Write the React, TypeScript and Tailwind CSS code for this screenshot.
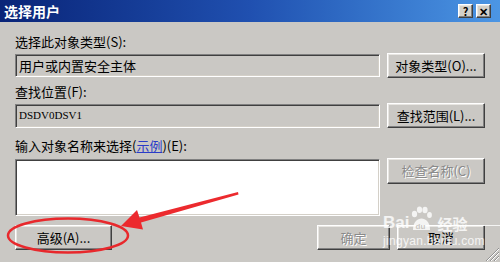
import React from 'react';

const raised =
  'border border-t-white border-l-white border-r-[#404040] border-b-[#404040] shadow-[inset_-1px_-1px_0_#808080,inset_1px_1px_0_#e8e6e2]';
const sunken =
  'border border-t-[#808080] border-l-[#808080] border-r-white border-b-white shadow-[inset_1px_1px_0_#404040,inset_-1px_-1px_0_#d4d0c8]';
const disabledText = 'text-[#8a8a8a] [text-shadow:1px_1px_0_#ffffff]';

function TitleButton({ children }: { children: React.ReactNode }) {
  return (
    <div
      className={`flex h-[14px] w-[15px] items-center justify-center bg-[#d4d0c8] text-[11px] font-bold leading-none text-black ${raised}`}
    >
      {children}
    </div>
  );
}

function Button({
  children,
  className = '',
  disabled = false,
}: {
  children: React.ReactNode;
  className?: string;
  disabled?: boolean;
}) {
  return (
    <div
      className={`flex h-[25px] items-center justify-center text-[13px] ${raised} ${
        disabled ? disabledText : 'text-black'
      } ${className}`}
    >
      {children}
    </div>
  );
}

// baidu jingyan watermark over the bottom right corner
function Watermark() {
  return (
    <div className="pointer-events-none absolute left-[383px] top-[206px] flex w-max flex-col whitespace-nowrap text-white/80">
      <div className="flex items-end">
        <span className="font-['Liberation_Sans',sans-serif] text-[17px] font-bold leading-none">Bai</span>
        <svg width="24" height="26" viewBox="0 0 24 26" className="mb-[-1px] shrink-0">
          <ellipse cx="5.5" cy="8" rx="2.6" ry="3.2" fill="currentColor" />
          <ellipse cx="10.5" cy="3.8" rx="2.6" ry="3.2" fill="currentColor" />
          <ellipse cx="16" cy="4" rx="2.6" ry="3.2" fill="currentColor" />
          <ellipse cx="20.5" cy="9" rx="2.4" ry="3" fill="currentColor" />
          <path d="M4 24 C4 16 8.5 12.5 12.5 12.5 C16.5 12.5 21 16 21 24 Z" fill="currentColor" />
          <text x="6.5" y="22.5" fontSize="8" fontFamily="Liberation Sans, sans-serif" fill="#c8c6c2" fontWeight="bold">
            du
          </text>
        </svg>
        <span className="ml-[4px] font-['Noto_Sans_CJK_SC',sans-serif] text-[15px] font-bold leading-none">经验</span>
        <div className="mb-[5px] ml-[6px] h-[1px] w-[40px] bg-white/80" />
      </div>
      <span className="mt-[4px] font-['Liberation_Sans',sans-serif] text-[12px] leading-none tracking-[0.3px]">
        jingyan.baidu.com
      </span>
    </div>
  );
}

export default function App() {
  return (
    <div className="relative h-[262px] w-[500px] overflow-hidden bg-[#cac8c4] font-['Noto_Sans_CJK_SC','Liberation_Sans',sans-serif] text-black">
      <div className="flex h-[22px] items-center justify-between bg-gradient-to-r from-[#0a2478] via-[#2050b0] to-[#4c96e4] pl-[4px] pr-[9px]">
        <span className="text-[14px] font-bold leading-none text-white">选择用户</span>
        <div className="flex gap-[3px]">
          <TitleButton>?</TitleButton>
          <TitleButton>✕</TitleButton>
        </div>
      </div>

      <div className="flex flex-col px-[15px]">
        <div className="mt-[12px] h-[16px] text-[13px] leading-[16px]">选择此对象类型(S):</div>
        <div className="mt-[3px] flex items-center gap-[7px]">
          <div className={`flex h-[23px] flex-1 items-center pl-[3px] text-[13px] ${sunken}`}>用户或内置安全主体</div>
          <Button className="w-[98px]">对象类型(O)...</Button>
        </div>

        <div className="mt-[6px] h-[16px] text-[13px] leading-[16px]">查找位置(F):</div>
        <div className="mt-[3px] flex items-center gap-[7px]">
          <div
            className={`flex h-[24px] flex-1 items-center pl-[3px] font-['Liberation_Serif',serif] text-[11px] ${sunken}`}
          >
            DSDV0DSV1
          </div>
          <Button className="h-[24px] w-[98px]">查找范围(L)...</Button>
        </div>

        <div className="mt-[10px] h-[16px] text-[13px] leading-[16px]">
          输入对象名称来选择(<span className="text-[#2a3cc8] underline">示例</span>)(E):
        </div>
        <div className="mt-[4px] flex items-start gap-[7px]">
          <div className={`mt-[1px] h-[57px] flex-1 bg-white ${sunken}`} />
          <Button disabled className="h-[26px] w-[98px]">
            检查名称(C)
          </Button>
        </div>

        <div className="mt-[9px] flex items-center">
          <Button className="w-[97px]">高级(A)...</Button>
          <div className="flex-1" />
          <Button disabled className="w-[73px]">
            确定
          </Button>
          <Button className="ml-[7px] w-[88px]">取消</Button>
        </div>
      </div>

      <Watermark />

      <svg className="pointer-events-none absolute left-0 top-0" width="500" height="262">
        <ellipse cx="68" cy="235.5" rx="60" ry="17" fill="none" stroke="#e8282c" strokeWidth="2.5" />
        <polygon
          points="121,226 137,210 139.5,217.5 238,192 238.5,194.5 141,222.5 143,229.5"
          fill="#ec2a2e"
        />
        <g stroke="#909090" strokeWidth="1">
          <line x1="486" y1="261" x2="499" y2="248" />
          <line x1="490" y1="261" x2="499" y2="252" />
          <line x1="494" y1="261" x2="499" y2="256" />
        </g>
        <g stroke="#ffffff" strokeWidth="1">
          <line x1="487" y1="261" x2="499" y2="249" />
          <line x1="491" y1="261" x2="499" y2="253" />
          <line x1="495" y1="261" x2="499" y2="257" />
        </g>
      </svg>
    </div>
  );
}
